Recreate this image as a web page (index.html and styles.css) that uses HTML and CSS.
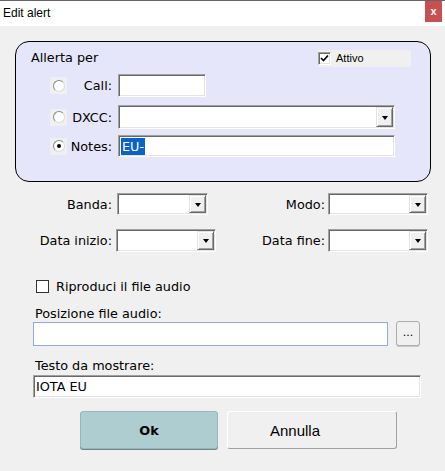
FILE: index.html
```html
<!DOCTYPE html>
<html>
<head>
<meta charset="utf-8">
<title>Edit alert</title>
<link rel="stylesheet" href="styles.css">
</head>
<body>
<div class="titlebar">
  <span class="title">Edit alert</span>
  <span class="close">x</span>
</div>

<div class="group">
  <div class="group-head">
    <span class="group-title">Allerta per</span>
    <div class="attivo">
      <span class="chk3d"><svg width="9" height="9" viewBox="0 0 9 9"><polyline points="1,4 3.5,6.5 8,1.5" fill="none" stroke="#000" stroke-width="1.7"/></svg></span>
      <span>Attivo</span>
    </div>
  </div>
  <div class="opt-row row-call">
    <span class="radio-cell"><span class="radio"></span></span>
    <span class="opt-label">Call:</span>
    <span class="sunken call"></span>
  </div>
  <div class="opt-row row-dxcc">
    <span class="radio-cell"><span class="radio"></span></span>
    <span class="opt-label">DXCC:</span>
    <span class="sunken combo wide"><span class="drop"></span></span>
  </div>
  <div class="opt-row row-notes">
    <span class="radio-cell"><span class="radio checked"></span></span>
    <span class="opt-label">Notes:</span>
    <span class="sunken wide text"><span class="sel">EU-</span></span>
  </div>
</div>

<div class="filters">
  <span class="f-label">Banda:</span>
  <span class="sunken combo banda"><span class="drop"></span></span>
  <span class="f-label right">Modo:</span>
  <span class="sunken combo"><span class="drop"></span></span>
  <span class="f-label">Data inizio:</span>
  <span class="sunken combo"><span class="drop"></span></span>
  <span class="f-label right">Data fine:</span>
  <span class="sunken combo"><span class="drop"></span></span>
</div>

<div class="audio">
  <div class="chk-row">
    <span class="chk"></span>
    <span>Riproduci il file audio</span>
  </div>
  <div class="caption">Posizione file audio:</div>
  <div class="path-row">
    <span class="path"></span>
    <span class="browse">...</span>
  </div>
  <div class="caption">Testo da mostrare:</div>
  <div class="sunken text message">IOTA EU</div>
</div>

<div class="actions">
  <span class="btn ok">Ok</span>
  <span class="btn cancel">Annulla</span>
</div>
</body>
</html>
```

FILE: styles.css
```css
*{
  box-sizing:border-box;
}
body{
  margin:0;
  width:445px;
  height:471px;
  overflow:hidden;
  background:#f0f0f0;
  color:#000;
  font-family:"DejaVu Sans", Verdana, sans-serif;
  font-size:12.8px;
  line-height:15px;
}

/* window caption */
.titlebar{
  height:26px;
  background:#fff;
  border-top:1px solid #646464;
  display:flex;
  justify-content:space-between;
  align-items:flex-start;
}
.title{
  font-family:"Liberation Sans", Arial, sans-serif;
  font-size:12px;
  line-height:14px;
  margin:5px 0 0 3px;
}
.close{
  width:17px;
  height:21px;
  margin-right:3px;
  background:#c75050;
  color:#fff;
  font-family:"Liberation Sans", Arial, sans-serif;
  font-weight:bold;
  font-size:11px;
  display:flex;
  align-items:center;
  justify-content:center;
}

/* group box */
.group{
  margin:15px 0 0 15px;
  width:416px;
  height:141px;
  padding-top:8px;
  background:#e6e6fa;
  border:1px solid #000;
  border-radius:14px;
}
.group-head{
  display:flex;
  height:17px;
  padding-left:15px;
}
.attivo{
  margin-left:auto;
  margin-right:19px;
  width:93px;
  height:17px;
  background:#f0f0f0;
  display:flex;
  align-items:center;
  font-family:"Liberation Sans", Arial, sans-serif;
  font-size:11px;
}
.chk3d{
  width:13px;
  height:13px;
  margin-right:5px;
  background:#fff;
  border:1px solid;
  border-color:#a0a0a0 #fff #fff #a0a0a0;
  box-shadow:inset 1px 1px #696969, inset -1px -1px #e3e3e3;
  display:flex;
  align-items:center;
  justify-content:center;
}
.opt-row{
  display:flex;
  align-items:center;
  padding-left:34px;
}
.row-call{
  margin-top:7px;
  height:23px;
}
.row-dxcc{
  margin-top:8px;
  height:24px;
}
.row-notes{
  margin-top:6px;
  height:22px;
}
.radio-cell{
  width:17px;
  height:17px;
  background:#f0f0f0;
  display:flex;
  align-items:center;
  justify-content:center;
}
.radio{
  width:12px;
  height:12px;
  border-radius:50%;
  background:#fff;
  border:1px solid;
  border-color:#8a8a8a #dcdcdc #dcdcdc #8a8a8a;
  display:flex;
  align-items:center;
  justify-content:center;
}
.radio.checked::after{
  content:"";
  width:4px;
  height:4px;
  border-radius:50%;
  background:#000;
}
.opt-label{
  width:45px;
  margin-right:6px;
  text-align:right;
}

/* sunken fields */
.sunken{
  display:flex;
  align-items:center;
  height:100%;
  background:#fff;
  border:1px solid;
  border-color:#a0a0a0 #fff #fff #a0a0a0;
  box-shadow:inset 1px 1px #696969, inset -1px -1px #e3e3e3;
}
.call{
  width:88px;
}
.wide{
  width:277px;
}
.text{
  padding-left:2px;
}
.sel{
  background:#0a64c8;
  color:#fff;
  padding:0 1px;
  line-height:17px;
}
.combo{
  justify-content:flex-end;
  padding:1px;
}
.drop{
  width:17px;
  height:100%;
  background:#f0f0f0;
  border:1px solid;
  border-color:#e3e3e3 #696969 #696969 #e3e3e3;
  box-shadow:inset 1px 1px #fff, inset -1px -1px #a0a0a0;
  display:flex;
  align-items:center;
  justify-content:center;
}
.drop::after{
  content:"";
  border-top:4px solid #000;
  border-left:3.5px solid transparent;
  border-right:3.5px solid transparent;
  margin-top:1px;
}

/* band / mode / dates */
.filters{
  margin:11px 0 0 15px;
  display:grid;
  grid-template-columns:101px 100px 112px 100px;
  grid-template-rows:22px 23px;
  row-gap:14px;
}
.f-label{
  align-self:center;
  text-align:right;
  padding-right:4px;
}
.f-label.right{
  padding-right:3px;
}
.banda{
  width:91px;
  margin-left:1px;
}

/* audio */
.audio{
  margin-top:27px;
  padding-left:33px;
}
.chk-row{
  display:flex;
  align-items:center;
  height:15px;
  margin-left:3px;
}
.chk{
  width:13px;
  height:13px;
  margin-right:7px;
  background:#fff;
  border:1px solid #333;
}
.caption{
  margin-top:12px;
  padding-left:2px;
}
.path-row{
  display:flex;
  margin-top:1px;
  height:24px;
}
.path{
  width:355px;
  background:#fff;
  border:1px solid #92a8e0;
}
.browse{
  width:24px;
  height:25px;
  margin:-1px 0 0 8px;
  background:#f0f0f0;
  border:1px solid #adadad;
  border-radius:3px;
  box-shadow:0 1px 0 #c8c8c8;
  font-size:11px;
  display:flex;
  align-items:flex-end;
  justify-content:center;
  padding-bottom:5px;
}
.message{
  margin-top:2px;
  width:388px;
  height:23px;
}

/* buttons */
.actions{
  display:flex;
  gap:9px;
  margin:13px 0 0 80px;
}
.btn{
  height:38px;
  border-radius:3px;
  display:flex;
  align-items:center;
  justify-content:center;
}
.ok{
  width:138px;
  background:#aecdd0;
  border:1px solid #98b6b9;
  box-shadow:0 1px 0 #6f8789;
  font-weight:bold;
}
.cancel{
  width:170px;
  padding-right:34px;
  background:#f0f0f0;
  border:1px solid;
  border-color:#fff #a0a0a0 #a0a0a0 #fff;
  font-family:"Liberation Sans", Arial, sans-serif;
  font-size:15px;
}
```
